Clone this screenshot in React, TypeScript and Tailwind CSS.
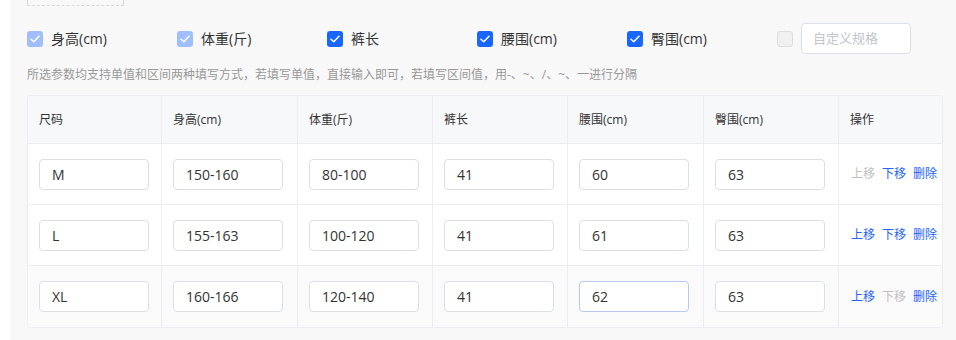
import React from "react";

const font = { fontFamily: '"Open Sans", "Noto Sans CJK SC", sans-serif' };

function Check({ state }: { state: "on" | "dis" | "off" }) {
  if (state === "off") {
    return <div className="w-[16px] h-[16px] rounded-[3px] bg-[#f0f0f0] border border-[#dddddd]" />;
  }
  return (
    <div
      className={
        "w-[16px] h-[16px] rounded-[3px] flex items-center justify-center " +
        (state === "on" ? "bg-[#1966ff]" : "bg-[#a0bdfc]")
      }
    >
      <svg width="10" height="8" viewBox="0 0 10 8" fill="none">
        <path d="M1 4.2L3.8 6.8L9 1.2" stroke="white" strokeWidth="1.5" strokeLinecap="round" strokeLinejoin="round" />
      </svg>
    </div>
  );
}

const opts: { label: string; state: "on" | "dis" }[] = [
  { label: "身高(cm)", state: "dis" },
  { label: "体重(斤)", state: "dis" },
  { label: "裤长", state: "on" },
  { label: "腰围(cm)", state: "on" },
  { label: "臀围(cm)", state: "on" },
];

const headers = ["尺码", "身高(cm)", "体重(斤)", "裤长", "腰围(cm)", "臀围(cm)", "操作"];

const rows = [
  ["M", "150-160", "80-100", "41", "60", "63"],
  ["L", "155-163", "100-120", "41", "61", "63"],
  ["XL", "160-166", "120-140", "41", "62", "63"],
];

function Action({ text, disabled }: { text: string; disabled: boolean }) {
  return <span className={disabled ? "text-[#c0c0c0]" : "text-[#2563ff]"}>{text}</span>;
}

export default function App() {
  return (
    <div className="flex w-[956px] h-[340px] overflow-hidden bg-white" style={font}>
      <div className="w-[10px] bg-white" />
      <div className="flex-1 bg-[#f8f8f8] pl-[17px] pr-[13px] flex flex-col">
        <div className="w-[97px] h-[6px] border-l border-r border-b border-dashed border-[#d9d9d9]" />
        <div className="flex items-center mt-[17px] h-[31px]">
          {opts.map((o) => (
            <div key={o.label} className="w-[150px] flex items-center gap-[8px]">
              <Check state={o.state} />
              <span className="text-[14px] text-[#333333] leading-none">{o.label}</span>
            </div>
          ))}
          <div className="flex items-center gap-[8px]">
            <Check state="off" />
            <div className="w-[110px] h-[31px] rounded-[4px] border border-[#dcdfe6] bg-white flex items-center pl-[11px] text-[13px] text-[#c0c4cc]">
              自定义规格
            </div>
          </div>
        </div>
        <div className="mt-[12px] h-[18px] leading-[18px] text-[12px] text-[#999999]">
          所选参数均支持单值和区间两种填写方式，若填写单值，直接输入即可，若填写区间值，用-、~、/、~、一进行分隔
        </div>
        <div className="mt-[11px] w-[916px] border border-[#ebedf0] rounded-[4px] overflow-hidden bg-white">
          <div className="grid grid-cols-[134px_136px_135px_135px_136px_135px_1fr] h-[48px] bg-[#f7f8fa] border-b border-[#ebedf0]">
            {headers.map((h, i) => (
              <div
                key={h}
                className={
                  "flex items-center pl-[11px] text-[12px] text-[#333333] " +
                  (i < 6 ? "border-r border-[#ebedf0]" : "")
                }
              >
                {h}
              </div>
            ))}
          </div>
          {rows.map((r, ri) => (
            <div
              key={ri}
              className={
                "grid grid-cols-[134px_136px_135px_135px_136px_135px_1fr] h-[61px] " +
                (ri < 2 ? "border-b border-[#ebedf0] bg-white" : "bg-[#fafafa]")
              }
            >
              {r.map((v, ci) => (
                <div key={ci} className="flex items-center pl-[11px] border-r border-[#ebedf0]">
                  <div
                    className={
                      "w-[110px] h-[31px] rounded-[4px] border bg-white flex items-center pl-[12px] text-[14px] text-[#333333] " +
                      (ri === 2 && ci === 4 ? "border-[#b7c8f2]" : "border-[#dcdfe6]")
                    }
                  >
                    {v}
                  </div>
                </div>
              ))}
              <div className="flex items-center pl-[12px] gap-[7px] text-[12px]">
                <Action text="上移" disabled={ri === 0} />
                <Action text="下移" disabled={ri === 2} />
                <Action text="删除" disabled={false} />
              </div>
            </div>
          ))}
        </div>
      </div>
    </div>
  );
}
